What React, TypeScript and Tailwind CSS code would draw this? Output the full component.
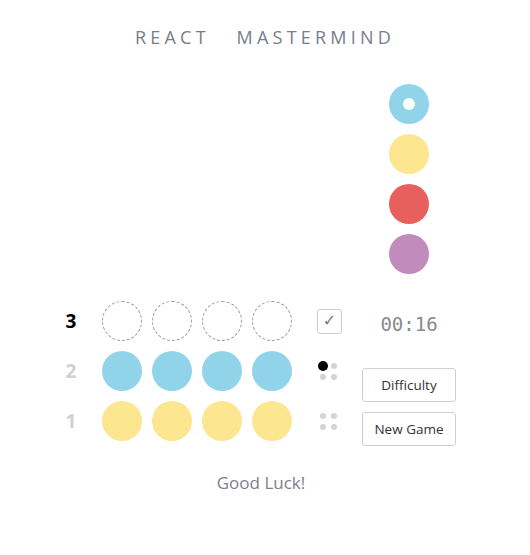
import React from "react";

const BLUE = "bg-[#91d4ea]";
const YELLOW = "bg-[#fce68f]";

function Peg({ kind }: { kind: "black" | "gray" }) {
  return (
    <div className="flex h-[11px] w-[11px] items-center justify-center">
      {kind === "black" ? (
        <div className="h-[10px] w-[10px] rounded-full bg-black" />
      ) : (
        <div className="h-[6px] w-[6px] rounded-full bg-[#d3d3d3]" />
      )}
    </div>
  );
}

function Row({
  n,
  active,
  color,
  pegs,
}: {
  n: number;
  active?: boolean;
  color?: string;
  pegs?: ("black" | "gray")[];
}) {
  return (
    <div className="flex h-[50px] items-center">
      <div
        className={`w-[24px] text-center text-[19px] font-bold ${
          active ? "text-black" : "text-[#d0d0d0]"
        }`}
      >
        {n}
      </div>
      <div className="ml-[19px] flex gap-[10px]">
        {[0, 1, 2, 3].map((i) =>
          color ? (
            <div key={i} className={`h-[40px] w-[40px] rounded-full ${color}`} />
          ) : (
            <div
              key={i}
              className="h-[40px] w-[40px] rounded-full border border-dashed border-[#9a9a9a]"
            />
          )
        )}
      </div>
      <div className="ml-[25px] w-[25px]">
        {active ? (
          <div
            className="flex h-[25px] w-[25px] items-center justify-center rounded-[3px] border border-[#cfcfcf] text-[16px] text-[#777]"
            style={{ fontFamily: '"DejaVu Sans", sans-serif' }}
          >
            ✓
          </div>
        ) : (
          <div className="grid w-[22px] grid-cols-2">
            {pegs!.map((p, i) => (
              <Peg key={i} kind={p} />
            ))}
          </div>
        )}
      </div>
    </div>
  );
}

export default function App() {
  return (
    <div
      className="h-[555px] w-[530px] bg-white"
      style={{ fontFamily: '"Open Sans", "Noto Sans", sans-serif' }}
    >
      <div className="pt-[25px] text-center text-[18px] leading-[24px] tracking-[0.235em] text-[#787c8c]">
        REACT&nbsp;&nbsp; MASTERMIND
      </div>
      <div className="mt-[35px] flex items-end pl-[59px]">
        <div className="flex flex-col">
          <Row n={3} active />
          <Row n={2} color={BLUE} pegs={["black", "gray", "gray", "gray"]} />
          <Row n={1} color={YELLOW} pegs={["gray", "gray", "gray", "gray"]} />
        </div>
        <div className="ml-[20px] flex w-[94px] flex-col items-center">
          <div className="flex flex-col gap-[10px]">
            <div className={`flex h-[40px] w-[40px] items-center justify-center rounded-full ${BLUE}`}>
              <div className="h-[12px] w-[12px] rounded-full bg-white" />
            </div>
            <div className={`h-[40px] w-[40px] rounded-full ${YELLOW}`} />
            <div className="h-[40px] w-[40px] rounded-full bg-[#e7605e]" />
            <div className="h-[40px] w-[40px] rounded-full bg-[#c18bbc]" />
          </div>
          <div
            className="mt-[38px] flex h-[24px] items-center text-[19px] text-[#8a8a8a]"
            style={{ fontFamily: '"DejaVu Sans Mono", "Liberation Mono", monospace' }}
          >
            00:16
          </div>
          <button className="mt-[32px] h-[34px] w-[94px] rounded-[3px] border border-[#cfcfcf] bg-white text-[13.5px] text-[#333]">
            Difficulty
          </button>
          <button className="mt-[10px] h-[34px] w-[94px] rounded-[3px] border border-[#cfcfcf] bg-white text-[13.5px] text-[#333]">
            New Game
          </button>
        </div>
      </div>
      <div className="mt-[25px] pr-[8px] text-center text-[17px] leading-[24px] text-[#7c7f8c]">
        Good Luck!
      </div>
    </div>
  );
}
